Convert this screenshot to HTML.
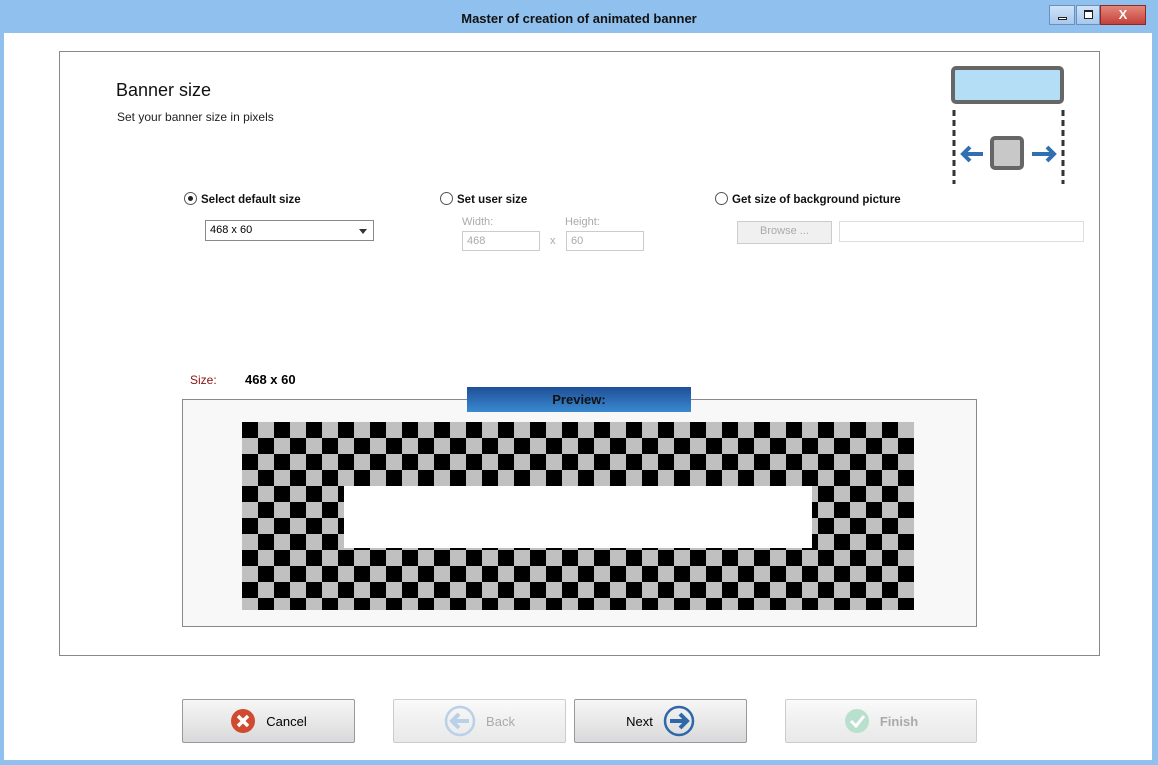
<!DOCTYPE html>
<html><head><style>
*{margin:0;padding:0;box-sizing:border-box}
body{width:1158px;height:765px;background:#8fc0ee;font-family:"Liberation Sans",Tahoma,sans-serif;font-size:12px;position:relative;overflow:hidden}
.abs{position:absolute}
.title{left:0;top:0;width:1158px;height:33px;text-align:center;line-height:38px;font-weight:bold;font-size:13px;color:#111}
.client{left:4px;top:33px;width:1148px;height:727px;background:#fff}
.frame{left:59px;top:51px;width:1041px;height:605px;border:1px solid #888}
.btn{height:44px;width:173px;border:1px solid #999;border-radius:2px;background:linear-gradient(#f6f6f6,#e8e8e8 50%,#d9d9dc);font-size:13px;display:flex;align-items:center;justify-content:center;gap:10px}
.dis{border-color:#ccc;color:#aaa;background:linear-gradient(#fafafa,#f0f0f0 50%,#e9e9e9)}
.radio{width:13px;height:13px;border:1px solid #555;border-radius:50%;display:inline-block;vertical-align:-2px;margin-right:4px;background:#fff;position:relative}
.lbl{font-weight:bold;font-size:11.5px;color:#111}
.dinput{border:1px solid #ccc;color:#aaa;font-size:11px;height:20px;padding:3px 4px;background:#fff}
</style></head><body>
<div class="abs title">Master of creation of animated banner</div>
<div class="abs" style="left:1049px;top:5px;width:26px;height:20px;border:1px solid #6a90c0;background:linear-gradient(#cfe3f8,#a8c8ec)"><div class="abs" style="left:8px;top:11px;width:9px;height:3px;border:1px solid #222;background:#fff"></div></div>
<div class="abs" style="left:1076px;top:5px;width:24px;height:20px;border:1px solid #6a90c0;background:linear-gradient(#cfe3f8,#a8c8ec)"><div class="abs" style="left:7px;top:4px;width:9px;height:9px;border:1px solid #222;border-top-width:2px;background:#fff"></div></div>
<div class="abs" style="left:1100px;top:5px;width:46px;height:20px;border:1px solid #8a2a20;background:linear-gradient(#e4877a,#c4403a);color:#fff;font-weight:bold;text-align:center;line-height:18px;font-size:13px">X</div>
<div class="abs client"></div>
<div class="abs frame"></div>
<div class="abs" style="left:116px;top:80px;font-size:18px;color:#111">Banner size</div>
<div class="abs" style="left:117px;top:110px;font-size:12px;color:#222">Set your banner size in pixels</div>
<svg class="abs" style="left:945px;top:62px" width="125" height="125">
<rect x="8" y="6" width="109" height="34" rx="3" fill="#b4def6" stroke="#666" stroke-width="4"/>
<line x1="9" y1="48" x2="9" y2="122" stroke="#333" stroke-width="3" stroke-dasharray="6,4"/>
<line x1="118" y1="48" x2="118" y2="122" stroke="#333" stroke-width="3" stroke-dasharray="6,4"/>
<rect x="47" y="76" width="30" height="30" rx="3" fill="#c8c8c8" stroke="#666" stroke-width="4"/>
<path d="M38 92H18M25 85l-7 7 7 7" fill="none" stroke="#3070b0" stroke-width="4"/>
<path d="M87 92h22M102 85l7 7-7 7" fill="none" stroke="#3070b0" stroke-width="4"/>
</svg>
<div class="abs lbl" style="left:184px;top:192px"><span class="radio"><span class="abs" style="left:3px;top:3px;width:5px;height:5px;border-radius:50%;background:#222"></span></span>Select default size</div>
<div class="abs" style="left:205px;top:220px;width:169px;height:21px;border:1px solid #888;padding:3px 4px;font-size:11px">468 x 60<span class="abs" style="right:6px;top:8px;border:4px solid transparent;border-top:5px solid #333"></span></div>
<div class="abs lbl" style="left:440px;top:192px"><span class="radio"></span>Set user size</div>
<div class="abs" style="left:462px;top:216px;color:#aaa;font-size:11px">Width:</div>
<div class="abs" style="left:565px;top:216px;color:#aaa;font-size:11px">Height:</div>
<div class="abs dinput" style="left:462px;top:231px;width:78px">468</div>
<div class="abs" style="left:550px;top:235px;color:#aaa;font-size:11px">x</div>
<div class="abs dinput" style="left:566px;top:231px;width:78px">60</div>
<div class="abs lbl" style="left:715px;top:192px"><span class="radio"></span>Get size of background picture</div>
<div class="abs dinput" style="left:737px;top:221px;width:95px;height:23px;text-align:center;background:#f0f0f0">Browse ...</div>
<div class="abs" style="left:839px;top:221px;width:245px;height:21px;border:1px solid #ddd"></div>
<div class="abs" style="left:190px;top:373px;color:#8a1010;font-size:12px">Size:</div>
<div class="abs" style="left:245px;top:372px;font-weight:bold;font-size:13px">468 x 60</div>
<div class="abs" style="left:182px;top:399px;width:795px;height:228px;border:1px solid #888;background:#f8f8f8"></div>
<div class="abs" style="left:467px;top:387px;width:224px;height:25px;background:linear-gradient(#1e4f98,#3a8ad0);text-align:center;font-weight:bold;font-size:13px;line-height:26px;color:#111">Preview:</div>
<div class="abs" style="left:242px;top:422px;width:672px;height:188px;background:repeating-conic-gradient(#c0c0c0 0 25%,#000 0 50%) 0 0/32px 32px"></div>
<div class="abs" style="left:344px;top:486px;width:468px;height:62px;background:#fff"></div>
<div class="abs btn" style="left:182px;top:699px"><svg width="26" height="26"><circle cx="13" cy="13" r="12" fill="#d04a30"/><path d="M8 8l10 10M18 8L8 18" stroke="#fff" stroke-width="3.5"/></svg>Cancel</div>
<div class="abs btn dis" style="left:393px;top:699px"><svg width="32" height="32"><circle cx="16" cy="16" r="14" fill="none" stroke="#b8d0e8" stroke-width="2.5"/><path d="M25 16H9M15 9l-7 7 7 7" fill="none" stroke="#b8d0e8" stroke-width="4"/></svg>Back</div>
<div class="abs btn" style="left:574px;top:699px">Next<svg width="32" height="32"><circle cx="16" cy="16" r="14" fill="none" stroke="#2e68a8" stroke-width="2.5"/><path d="M7 16h16M17 9l7 7-7 7" fill="none" stroke="#2e68a8" stroke-width="4"/></svg></div>
<div class="abs btn dis" style="left:785px;top:699px;width:192px;font-weight:bold"><svg width="26" height="26"><circle cx="13" cy="13" r="12" fill="#b8e0cc"/><path d="M7 13l5 5 8-10" fill="none" stroke="#fff" stroke-width="3"/></svg>Finish</div>
</body></html>
